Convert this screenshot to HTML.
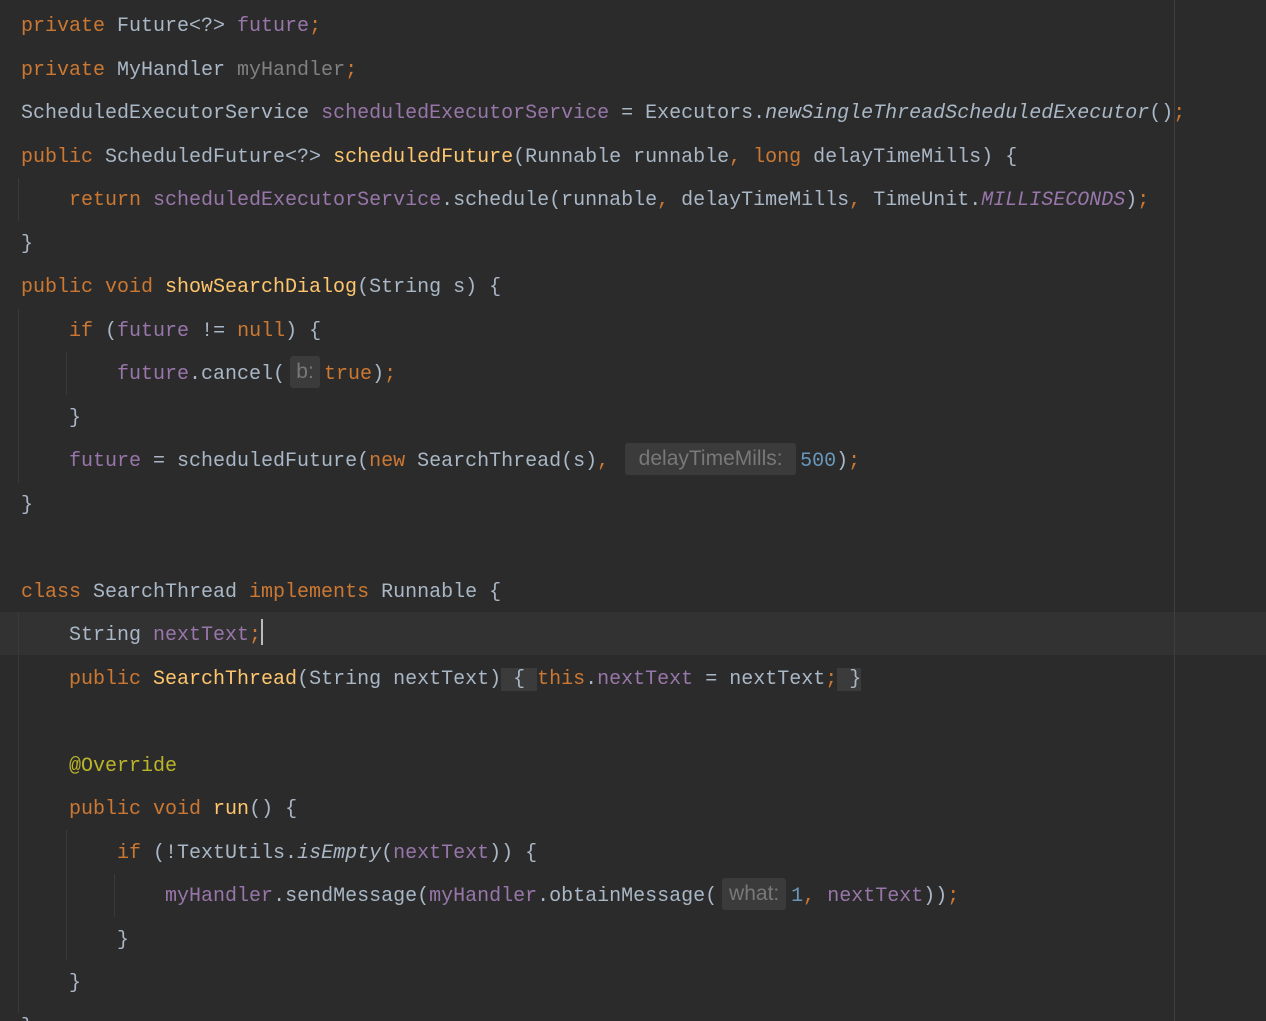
<!DOCTYPE html>
<html><head><meta charset="utf-8"><style>
html,body{margin:0;padding:0;background:#2b2b2b;width:1266px;height:1021px;overflow:hidden}
#c{position:relative;width:1266px;height:1021px}
.l{position:absolute;left:21px;height:43.5px;line-height:43.5px;white-space:pre;font-family:"Liberation Mono",monospace;font-size:20px;color:#a9b7c6;transform:translateY(2px)}
.k{color:#cc7832}.f{color:#9876aa}.m{color:#ffc66d}.n{color:#6897bb}.a{color:#bbb529}.g{color:#808080}
.i{font-style:italic}
.h{display:inline-block;background:#3b3b3b;color:#787878;font-family:"Liberation Sans",sans-serif;font-size:21px;text-align:center;border-radius:3px;line-height:32px;vertical-align:1px}
.b{background:#3b3b3b}
.v{position:absolute;width:1px;background:#3a3a3a}
</style></head><body><div id="c">
<div style="position:absolute;left:0;top:612px;width:1266px;height:43px;background:#323232"></div>
<div style="position:absolute;left:1174px;top:0;width:1px;height:1021px;background:#3f3f3f"></div>
<div class="v" style="left:18px;top:178px;height:43px"></div>
<div class="v" style="left:18px;top:309px;height:174px"></div>
<div class="v" style="left:66px;top:352px;height:43px"></div>
<div class="v" style="left:18px;top:613px;height:400px"></div>
<div class="v" style="left:66px;top:830px;height:130px"></div>
<div class="v" style="left:114px;top:874px;height:43px"></div>
<div class="l" style="top:3px"><span class="k">private </span>Future&lt;?&gt; <span class="f">future</span><span class="k">;</span></div>
<div class="l" style="top:46.5px"><span class="k">private </span>MyHandler <span class="g">myHandler</span><span class="k">;</span></div>
<div class="l" style="top:90px">ScheduledExecutorService <span class="f">scheduledExecutorService </span>= Executors.<span class="i">newSingleThreadScheduledExecutor</span>()<span class="k">;</span></div>
<div class="l" style="top:133.5px"><span class="k">public </span>ScheduledFuture&lt;?&gt; <span class="m">scheduledFuture</span>(Runnable runnable<span class="k">, long </span>delayTimeMills) {</div>
<div class="l" style="top:177px">    <span class="k">return </span><span class="f">scheduledExecutorService</span>.schedule(runnable<span class="k">, </span>delayTimeMills<span class="k">, </span>TimeUnit.<span class="f i">MILLISECONDS</span>)<span class="k">;</span></div>
<div class="l" style="top:220.5px">}</div>
<div class="l" style="top:264px"><span class="k">public void </span><span class="m">showSearchDialog</span>(String s) {</div>
<div class="l" style="top:307.5px">    <span class="k">if </span>(<span class="f">future </span>!= <span class="k">null</span>) {</div>
<div class="l" style="top:351px">        <span class="f">future</span>.cancel(<span class="h" style="width:30px;margin:0 4px 0 5px">b:</span><span class="k">true</span>)<span class="k">;</span></div>
<div class="l" style="top:394.5px">    }</div>
<div class="l" style="top:438px">    <span class="f">future </span>= scheduledFuture(<span class="k">new </span>SearchThread(s)<span class="k">, </span><span class="h" style="width:171px;margin:0 4px 0 4px">delayTimeMills:</span><span class="n">500</span>)<span class="k">;</span></div>
<div class="l" style="top:481.5px">}</div>
<div class="l" style="top:568.5px"><span class="k">class </span>SearchThread <span class="k">implements </span>Runnable {</div>
<div class="l" style="top:612px">    String <span class="f">nextText</span><span class="k">;</span><span style="display:inline-block;width:2px;height:26px;background:#bbbbbb;vertical-align:-5px"></span></div>
<div class="l" style="top:655.5px">    <span class="k">public </span><span class="m">SearchThread</span>(String nextText)<span class="b"> { </span><span class="k">this</span>.<span class="f">nextText </span>= nextText<span class="k">;</span><span class="b"> }</span></div>
<div class="l" style="top:742.5px">    <span class="a">@Override</span></div>
<div class="l" style="top:786px">    <span class="k">public void </span><span class="m">run</span>() {</div>
<div class="l" style="top:829.5px">        <span class="k">if </span>(!TextUtils.<span class="i">isEmpty</span>(<span class="f">nextText</span>)) {</div>
<div class="l" style="top:873px">            <span class="f">myHandler</span>.sendMessage(<span class="f">myHandler</span>.obtainMessage(<span class="h" style="width:64px;margin:0 5px 0 5px">what:</span><span class="n">1</span><span class="k">, </span><span class="f">nextText</span>))<span class="k">;</span></div>
<div class="l" style="top:916.5px">        }</div>
<div class="l" style="top:960px">    }</div>
<div class="l" style="top:1003.5px">}</div>
</div></body></html>
